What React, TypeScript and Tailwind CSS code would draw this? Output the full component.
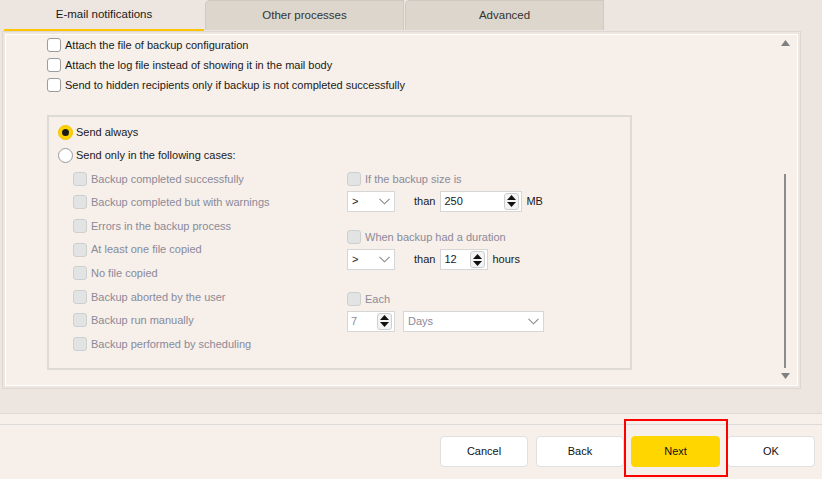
import React from "react";

const font = { fontFamily: '"Liberation Sans", Arial, sans-serif' };

function Check({ disabled, label }: { disabled?: boolean; label: string }) {
  return (
    <div className="flex items-center h-full">
      <span
        className={
          "w-[14px] h-[14px] rounded-[3px] border shrink-0 " +
          (disabled ? "bg-[#e2e4e4] border-[#cdd0d0]" : "bg-white border-[#9c9c9c]")
        }
      />
      <span className={"ml-[4px] " + (disabled ? "text-[#8a8a9a]" : "text-[#1a1a1a]")}>{label}</span>
    </div>
  );
}

function Radio({ checked, label }: { checked?: boolean; label: string }) {
  return (
    <div className="flex items-center h-[23px]">
      {checked ? (
        <span className="w-[15px] h-[15px] rounded-full bg-[#ffd200] border border-[#f0c400] flex items-center justify-center shrink-0">
          <span className="w-[7px] h-[7px] rounded-full bg-[#1a1a1a]" />
        </span>
      ) : (
        <span className="w-[15px] h-[15px] rounded-full bg-white border border-[#9a9a9a] shrink-0" />
      )}
      <span className="ml-[3px] text-[#1a1a1a]">{label}</span>
    </div>
  );
}

function Chevron() {
  return (
    <svg width="11" height="7" viewBox="0 0 11 7" className="shrink-0">
      <path d="M0.5 0.8 L5.5 5.8 L10.5 0.8" fill="none" stroke="#8a8a8a" strokeWidth="1.1" />
    </svg>
  );
}

function Select({ value, w, disabled }: { value: string; w: string; disabled?: boolean }) {
  return (
    <div className={"h-[21px] bg-white border border-[#d6d6d6] flex items-center justify-between pl-[4px] pr-[4px] " + w}>
      <span className={disabled ? "text-[#8a8a9a]" : "text-[#1a1a1a]"}>{value}</span>
      <Chevron />
    </div>
  );
}

function Spinner() {
  return (
    <div className="w-[15px] h-[17px] border border-[#cfcfcf] rounded-[3px] bg-[#f4f4f4] flex flex-col items-center justify-center gap-[2px]">
      <svg width="9" height="5" viewBox="0 0 9 5">
        <path d="M0 5 L4.5 0 L9 5 Z" fill="#111" />
      </svg>
      <svg width="9" height="5" viewBox="0 0 9 5">
        <path d="M0 0 L4.5 5 L9 0 Z" fill="#111" />
      </svg>
    </div>
  );
}

function NumInput({ value, w, disabled }: { value: string; w: string; disabled?: boolean }) {
  return (
    <div className={"h-[21px] bg-white border border-[#d6d6d6] flex items-center justify-between pl-[3px] pr-[2px] " + w}>
      <span className={disabled ? "text-[#8a8a9a]" : "text-[#1a1a1a]"}>{value}</span>
      <Spinner />
    </div>
  );
}

function Button({ label, primary, w }: { label: string; primary?: boolean; w?: string }) {
  return (
    <div
      className={
        "h-[31px] rounded-[4px] flex items-center justify-center border text-[#111] " +
        (w ? w : "w-[88px] ") +
        (primary ? " bg-[#ffd600] border-[#ffd600]" : " bg-white border-[#e0e0e0]")
      }
    >
      {label}
    </div>
  );
}

export default function App() {
  const cases = [
    "Backup completed successfully",
    "Backup completed but with warnings",
    "Errors in the backup process",
    "At least one file copied",
    "No file copied",
    "Backup aborted by the user",
    "Backup run manually",
    "Backup performed by scheduling",
  ];
  return (
    <div style={font} className="w-[822px] h-[479px] bg-[#ede6e0] text-[11px] flex flex-col overflow-hidden">
      {/* Tabs */}
      <div className="h-[31px] flex pl-[4px] shrink-0">
        <div className="w-[200px] h-[31px] flex items-center justify-center border-b-2 border-[#ffc400] text-[#1a1a1a] text-[11.5px]">
          E-mail notifications
        </div>
        <div className="w-[199px] h-[30px] ml-[1px] bg-[#ddd6cc] border border-[#cfc9c2] border-b-0 rounded-tl-[5px] flex items-center justify-center text-[#333] text-[11.5px]">
          Other processes
        </div>
        <div className="w-[199px] h-[30px] ml-[1px] bg-[#ddd6cc] border border-[#cfc9c2] border-b-0 rounded-tl-[5px] flex items-center justify-center text-[#333] text-[11.5px]">
          Advanced
        </div>
      </div>

      {/* Content panel */}
      <div className="ml-[2px] w-[799px] h-[358px] border border-[#dcd7d2] p-[2px] shrink-0">
        <div className="w-full h-full border border-white bg-[#f7efe9] flex">
          <div className="flex-1 pl-[41px]">
            <div className="h-[20px]"><Check label="Attach the file of backup configuration" /></div>
            <div className="h-[20px]"><Check label="Attach the log file instead of showing it in the mail body" /></div>
            <div className="h-[20px]"><Check label="Send to hidden recipients only if backup is not completed successfully" /></div>

            {/* Group box */}
            <div className="mt-[20px] w-[585px] h-[255px] border-2 border-[#dedad6] pl-[9px] pt-[4px]">
              <Radio checked label="Send always" />
              <Radio label="Send only in the following cases:" />
              <div className="flex">
                <div className="w-[289px] pl-[15px]">
                  {cases.map((c) => (
                    <div key={c} className="h-[23.6px]">
                      <Check disabled label={c} />
                    </div>
                  ))}
                </div>
                <div className="flex flex-col">
                  <div className="h-[23.6px]"><Check disabled label="If the backup size is" /></div>
                  <div className="flex items-center">
                    <Select value=">" w="w-[48px]" />
                    <span className="ml-[19px] text-[#1a1a1a]">than</span>
                    <div className="ml-[5px]"><NumInput value="250" w="w-[82px]" /></div>
                    <span className="ml-[4px] text-[#1a1a1a]">MB</span>
                  </div>
                  <div className="h-[23.6px] mt-[14px]"><Check disabled label="When backup had a duration" /></div>
                  <div className="flex items-center">
                    <Select value=">" w="w-[48px]" />
                    <span className="ml-[19px] text-[#1a1a1a]">than</span>
                    <div className="ml-[5px]"><NumInput value="12" w="w-[48px]" /></div>
                    <span className="ml-[4px] text-[#1a1a1a]">hours</span>
                  </div>
                  <div className="h-[23.6px] mt-[17px]"><Check disabled label="Each" /></div>
                  <div className="flex items-center">
                    <NumInput value="7" w="w-[48px]" disabled />
                    <div className="ml-[8px]"><Select value="Days" w="w-[141px]" disabled /></div>
                  </div>
                </div>
              </div>
            </div>
          </div>

          {/* Scrollbar */}
          <div className="w-[16px] mr-[4px] flex flex-col items-center pt-[5px] pb-[6px]">
            <svg width="9" height="6" viewBox="0 0 9 6">
              <path d="M0 6 L4.5 0 L9 6 Z" fill="#7f7f7f" />
            </svg>
            <div className="flex-1 w-full flex flex-col items-center justify-end pb-[5px]">
              <div className="w-[2px] h-[194px] bg-[#8c8c8c]" />
            </div>
            <svg width="9" height="6" viewBox="0 0 9 6">
              <path d="M0 0 L4.5 6 L9 0 Z" fill="#7f7f7f" />
            </svg>
          </div>
        </div>
      </div>

      {/* Separator */}
      <div className="mt-[24px] h-[12px] border-t border-b border-[#dcdad8] bg-[#f7efe9] shrink-0" />

      {/* Footer */}
      <div className="flex-1 bg-[#f7efe9] flex justify-end items-start pt-[11px] pr-[7px]">
        <Button label="Cancel" />
        <div className="ml-[8px]"><Button label="Back" /></div>
        <div className="relative ml-[7px]">
          <Button label="Next" primary w="w-[89px]" />
          <div className="absolute left-[-7px] right-[-8px] top-[-17px] bottom-[-10px] border-2 border-[#ff0000]" />
        </div>
        <div className="ml-[7px]"><Button label="OK" /></div>
      </div>
    </div>
  );
}
